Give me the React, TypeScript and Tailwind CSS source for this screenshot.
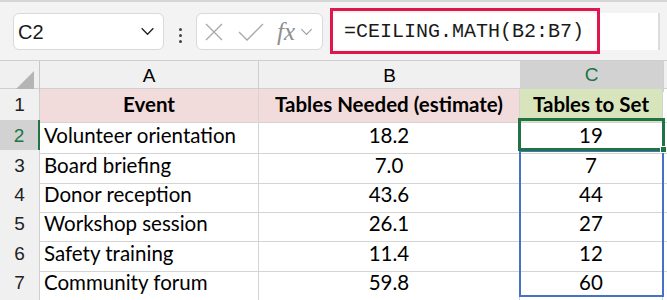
const rows = [
  { n: "2", event: "Volunteer orientation", est: "18.2", set: "19", h: "h-[30px]" },
  { n: "3", event: "Board briefing", est: "7.0", set: "7", h: "h-[29px]" },
  { n: "4", event: "Donor reception", est: "43.6", set: "44", h: "h-[29px]" },
  { n: "5", event: "Workshop session", est: "26.1", set: "27", h: "h-[30px]" },
  { n: "6", event: "Safety training", est: "11.4", set: "12", h: "h-[29px]" },
  { n: "7", event: "Community forum", est: "59.8", set: "60", h: "h-[30px]" },
];

const grid = "grid grid-cols-[40px_219px_261px_143px_4px]";
const cellFont = "pb-[2px] font-['Lato',sans-serif] text-[20.5px] text-black";
const headFont = "font-['Liberation_Sans',Arial,sans-serif] text-[19px]";

function Chevron({ className }: { className: string }) {
  return (
    <svg viewBox="0 0 16 10" fill="none" className={className}>
      <path d="M1.5 1.5 L8 8 L14.5 1.5" stroke="currentColor" strokeWidth="1.5" />
    </svg>
  );
}

export default function App() {
  return (
    <div className="h-[300px] w-[667px] overflow-hidden bg-white">
      {/* Formula bar */}
      <div className="flex h-[61px] items-start border-t-2 border-b border-[#d6d6d6] border-b-[#cfcfcf] bg-[#f3f3f3]">
        <div className="mt-[11px] ml-[13px] flex h-[37px] w-[151px] items-center justify-between rounded-[6px] border border-[#d9d9d9] bg-white pr-[8px] pl-[4px]">
          <span className="font-['Liberation_Sans',Arial,sans-serif] text-[20px] text-[#1a1a1a]">C2</span>
          <Chevron className="h-[9px] w-[15px] text-[#222]" />
        </div>
        <div className="mt-[26px] flex w-[32px] flex-col items-center gap-[3px]">
          <span className="h-[3px] w-[3px] rounded-full bg-[#444]" />
          <span className="h-[3px] w-[3px] rounded-full bg-[#444]" />
          <span className="h-[3px] w-[3px] rounded-full bg-[#444]" />
        </div>
        <div className="mt-[11px] flex h-[37px] w-[127px] items-center rounded-[6px] border border-[#d9d9d9] bg-white pl-[8px]">
          <svg viewBox="0 0 18 18" fill="none" className="h-[18px] w-[18px] text-[#a8a8a8]">
            <path d="M1 1 L17 17 M17 1 L1 17" stroke="currentColor" strokeWidth="1.3" />
          </svg>
          <svg viewBox="0 0 26 18" fill="none" className="ml-[15px] h-[18px] w-[26px] text-[#a8a8a8]">
            <path d="M1 9 L9 17 L25 1" stroke="currentColor" strokeWidth="1.3" />
          </svg>
          <span className="ml-[13px] font-['Liberation_Serif',serif] text-[25px] leading-none italic text-[#8f8f8f]">fx</span>
          <Chevron className="ml-[5px] h-[8px] w-[13px] text-[#a0a0a0]" />
        </div>
        <div className="relative mt-[11px] ml-[7px] flex h-[37px] w-[330px] items-center border-r-2 border-[#dcdcdc] bg-white">
          <span className="ml-[14px] font-['Liberation_Mono',monospace] text-[20px] text-[#1a1a1a]">=CEILING.MATH(B2:B7)</span>
          <div className="absolute top-[-5px] left-[0px] h-[46px] w-[270px] border-[3px] border-[#e0174d]" />
        </div>
      </div>

      {/* Sheet */}
      <div className="relative">
        {/* Column letters */}
        <div className={`${grid} h-[28px] border-b border-[#cfcfcf] bg-[#f0f0f0]`}>
          <div className="relative border-r border-[#c8c8c8]">
            <div className="absolute right-[5px] bottom-[3px] h-0 w-0 border-b-[18px] border-l-[18px] border-b-[#b5b5b5] border-l-transparent" />
          </div>
          <div className={`flex items-center justify-center border-r border-[#cfcfcf] text-black ${headFont}`}>A</div>
          <div className={`flex items-center justify-center text-black ${headFont}`}>B</div>
          <div className={`flex items-center justify-center border-b-2 border-[#217346] bg-[#d2d2d2] text-[#217346] ${headFont}`}>C</div>
          <div className="border-l border-[#cfcfcf]" />
        </div>

        {/* Header row */}
        <div className={`${grid} h-[31px]`}>
          <div className={`flex items-center justify-center border-r border-b border-[#cfcfcf] bg-[#f0f0f0] text-[#222] ${headFont}`}>1</div>
          <div className={`flex items-center justify-center border-r border-b border-[#d4d4d4] bg-[#f2dcdb] font-bold ${cellFont}`}>Event</div>
          <div className={`flex items-center justify-center border-r border-b border-[#d4d4d4] bg-[#f2dcdb] font-bold ${cellFont}`}>Tables Needed (estimate)</div>
          <div className={`flex items-center justify-center border-r border-b border-[#d4d4d4] bg-[#d8e4bc] font-bold ${cellFont}`}>Tables to Set</div>
          <div className="border-b border-[#d4d4d4]" />
        </div>

        {rows.map((r) => (
          <div key={r.n} className={`${grid} ${r.h}`}>
            {r.n === "2" ? (
              <div className={`flex items-center justify-center border-r-2 border-b border-r-[#217346] border-b-[#cfcfcf] bg-[#d2d2d2] text-[#217346] ${headFont}`}>{r.n}</div>
            ) : (
              <div className={`flex items-center justify-center border-r border-b border-[#cfcfcf] bg-[#f0f0f0] text-[#222] ${headFont}`}>{r.n}</div>
            )}
            <div className={`flex items-center border-r border-b border-[#d4d4d4] pl-[4px] ${cellFont}`}>{r.event}</div>
            <div className={`flex items-center justify-center border-r border-b border-[#d4d4d4] ${cellFont}`}>{r.est}</div>
            <div className={`flex items-center justify-center border-r border-b border-[#d4d4d4] ${cellFont}`}>{r.set}</div>
            <div className="border-b border-[#d4d4d4]" />
          </div>
        ))}

        <div className={`${grid} h-[4px]`}>
          <div className="border-r border-[#cfcfcf] bg-[#f0f0f0]" />
          <div className="border-r border-[#d4d4d4]" />
          <div className="border-r border-[#d4d4d4]" />
          <div className="border-r border-[#d4d4d4]" />
          <div />
        </div>

        {/* Selection overlays */}
        <div className="pointer-events-none absolute top-[89px] left-[519px] h-[147px] w-[145px] border-2 border-[#4472c4]" />
        <div className="pointer-events-none absolute top-[57px] left-[518px] h-[33px] w-[147px] border-[3px] border-[#217346]" />
        <div className="pointer-events-none absolute top-[85px] left-[660px] h-[7px] w-[7px] border border-white bg-[#217346]" />
      </div>
    </div>
  );
}
